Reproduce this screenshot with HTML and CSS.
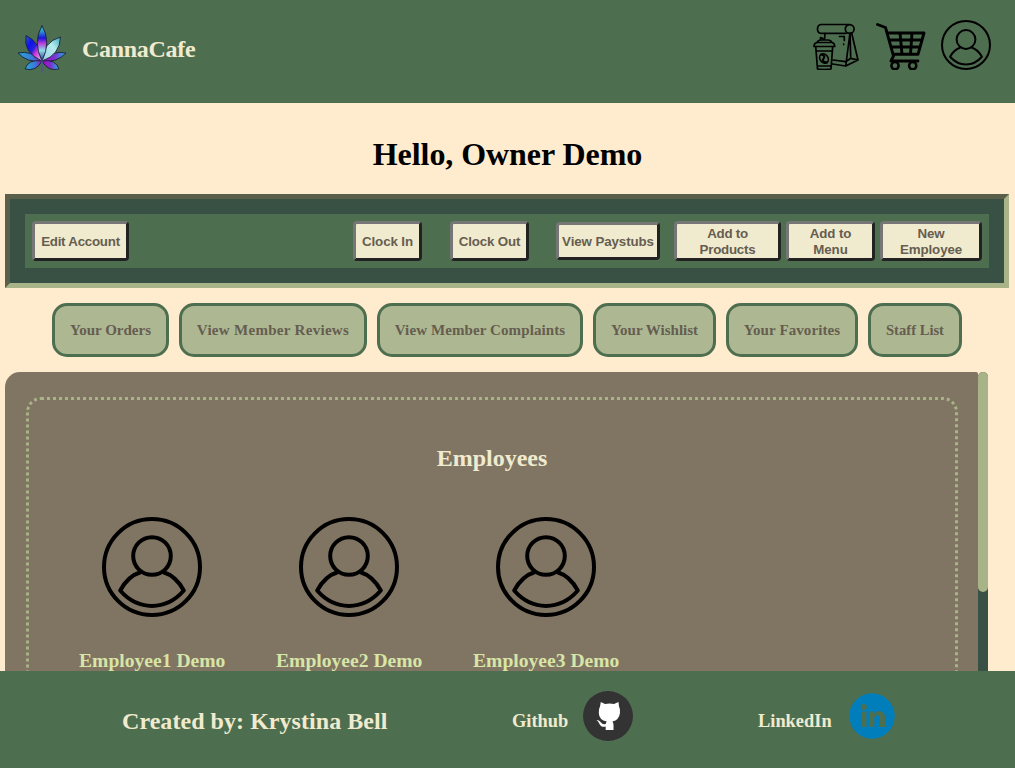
FILE: index.html
```html
<!DOCTYPE html>
<html lang="en">
<head>
<meta charset="utf-8">
<title>CannaCafe</title>
<link rel="stylesheet" href="styles.css">
</head>
<body>
<svg width="0" height="0" class="defs">
  <defs>
    <symbol id="user" viewBox="0 0 100 100">
      <g fill="none" stroke="#000" stroke-width="4" stroke-linejoin="round">
        <circle cx="50" cy="50" r="48"/>
        <circle cx="50" cy="39" r="18.800"/>
        <path d="M39 55Q26 59 18.200 73.500C36 94 64 94 81.800 73.500Q74 59 61 55"/>
      </g>
    </symbol>
    <linearGradient id="g1" x1="0" y1="0" x2="0" y2="1">
      <stop offset="0" stop-color="#35b5cf"/><stop offset=".15" stop-color="#35a0cf"/><stop offset=".35" stop-color="#1616dc"/><stop offset=".5" stop-color="#b83ad8"/><stop offset=".7" stop-color="#8edce8"/><stop offset="1" stop-color="#2c2c90"/>
    </linearGradient>
    <linearGradient id="g2" x1="0" y1="0" x2="1" y2="1">
      <stop offset="0" stop-color="#2a60c8"/><stop offset=".3" stop-color="#1010ee"/><stop offset=".5" stop-color="#2222dd"/><stop offset=".65" stop-color="#d236d2"/><stop offset="1" stop-color="#c9d4f0"/>
    </linearGradient>
    <linearGradient id="g3" x1="1" y1="0" x2="0" y2="1">
      <stop offset="0" stop-color="#35a9bd"/><stop offset=".4" stop-color="#b5ecec"/><stop offset="1" stop-color="#9bcfe6"/>
    </linearGradient>
    <linearGradient id="g4">
      <stop offset="0" stop-color="#2aa8d8"/><stop offset=".6" stop-color="#3a78d8"/><stop offset="1" stop-color="#9b10b8"/>
    </linearGradient>
    <linearGradient id="g5">
      <stop offset="0" stop-color="#b000c8"/><stop offset=".5" stop-color="#7a30d0"/><stop offset="1" stop-color="#25b3dc"/>
    </linearGradient>
  </defs>
</svg>
<header class="header">
  <div class="brand">
    <svg class="leaf" viewBox="0 0 50 50">
      <g stroke="#16203a" stroke-width=".9">
        <path fill="url(#g4)" d="M25 36Q14 25 1 28Q10 38 25 36Z"/>
        <path fill="url(#g5)" d="M25 36Q36 25 49 28Q40 38 25 36Z"/>
        <path fill="url(#g4)" d="M25 36Q11 34 8 44Q19 47 25 36Z"/>
        <path fill="url(#g5)" d="M25 36Q39 34 42 44Q31 47 25 36Z"/>
        <path fill="url(#g2)" d="M25 36Q6 28 9 10.500Q23 17 25 36Z"/>
        <path fill="url(#g3)" d="M25 36Q26 17 43.500 12Q43 30 25 36Z"/>
        <path fill="url(#g1)" d="M25 36Q15.500 17 25 .5Q34.500 17 25 36Z"/>
      </g>
      <path d="M25 34V48" stroke="#45559b" stroke-width="1.200"/>
    </svg>
    <span class="brand-name">CannaCafe</span>
  </div>
  <nav class="icons">
    <svg class="icon order" viewBox="0 0 50 50" fill="none" stroke="#000" stroke-width="1.700" stroke-linejoin="round" stroke-linecap="round">
      <path d="M38 4.500H10Q6.500 5 6.500 9T10 13.300H35"/><circle cx="38.700" cy="9" r="4.400"/>
      <path d="M14 13.500L13.500 19M39 13L34.700 46L21.500 44M40.700 13.300L47 40L34.700 46M39 13L39.700 38.300L47 40M39.700 38.300L34.700 41.700L22 40"/>
      <path d="M28.500 16.500H33.300V20.500M32.700 24V24.500"/>
      <path d="M9.500 20V17.500L12 18.500V20M6 22.500Q7 20 10 20H17Q20 20 21 22.500ZM6 22.500Q3 23 3 26.500H23.700Q23.700 23 21 22.500M4.700 26.500L6.500 49Q13 50 20 49L21.700 26.500M5.500 31H21.300M6.300 46H20.300"/>
      <ellipse cx="13" cy="38.500" rx="4" ry="5" transform="rotate(-35 13 38.500)"/>
      <path d="M10 34.500Q15 35.500 12.500 38.700T16 42.500" stroke-width="2"/>
    </svg>
    <svg class="icon cart" viewBox="0 0 50 50" fill="none" stroke="#000">
      <path d="M1.500 4.500L9.500 7.500L17.500 36L15 41H42" stroke-width="2.800" stroke-linejoin="round" stroke-linecap="round"/>
      <path d="M11 13H48L42 34.300H17M13 20H46M15 27H44M24 13L26 34M36 13L34.500 34" stroke-width="2.900" stroke-linejoin="round"/>
      <circle cx="19" cy="45.700" r="3.600" stroke-width="2.500"/><circle cx="36.700" cy="45.700" r="3.600" stroke-width="2.500"/>
    </svg>
    <svg class="icon"><use href="#user"/></svg>
  </nav>
</header>
<main class="main">
  <h1 class="title">Hello, Owner Demo</h1>
  <section class="toolbar">
    <div class="toolbar-row">
      <button class="btn edit">Edit Account</button>
      <button class="btn in">Clock In</button>
      <button class="btn out">Clock Out</button>
      <button class="btn pay">View Paystubs</button>
      <button class="btn products">Add to<br>Products</button>
      <button class="btn menu">Add to<br>Menu</button>
      <button class="btn employee">New<br>Employee</button>
    </div>
  </section>
  <nav class="tabs">
    <button class="tab orders">Your Orders</button>
    <button class="tab reviews">View Member Reviews</button>
    <button class="tab complaints">View Member Complaints</button>
    <button class="tab wishlist">Your Wishlist</button>
    <button class="tab favorites">Your Favorites</button>
    <button class="tab staff-list">Staff List</button>
  </nav>
  <section class="panel">
    <div class="panel-body">
      <div class="staff">
        <h2 class="staff-title">Employees</h2>
        <div class="cards">
          <div class="card"><svg class="avatar"><use href="#user"/></svg><h3 class="name">Employee1 Demo</h3></div>
          <div class="card"><svg class="avatar"><use href="#user"/></svg><h3 class="name">Employee2 Demo</h3></div>
          <div class="card"><svg class="avatar"><use href="#user"/></svg><h3 class="name">Employee3 Demo</h3></div>
        </div>
      </div>
    </div>
    <div class="track"><div class="thumb"></div></div>
  </section>
</main>
<footer class="footer">
  <span class="credit">Created by: Krystina Bell</span>
  <div class="link github"><span>Github</span>
    <svg class="gh" viewBox="0 0 50 50"><circle cx="25" cy="25" r="25" fill="#333"/>
      <path fill="#fff" d="M17.800 11L22 13Q26.500 12 31 13L35.500 11L36 15.500Q37.500 18 37 22Q36 29 29.500 30.500Q30.500 32 30.500 34V39H22.700V35.500C18 36.500 17 34 16 32Q15 30 13.500 29Q16 28.500 18 31.500Q19.500 34 22.700 33Q22.800 31.500 23.800 30.500Q16 29 15.800 22Q15.500 18 17 15.500Z"/>
    </svg>
  </div>
  <div class="link linkedin"><span>LinkedIn</span>
    <svg class="li" viewBox="0 0 46 46"><circle cx="23" cy="23" r="22.700" fill="#007ebb"/>
      <g fill="#4e6e50"><circle cx="14.800" cy="14" r="3"/><path d="M12.200 18.500H17.400V34H12.200ZM20 18.500H25V20.500Q26.700 18 30 18Q36 18 36 24.500V34H30.700V25.500Q30.700 22.300 28.200 22.300Q25.300 22.300 25.300 25.500V34H20Z"/></g>
    </svg>
  </div>
</footer>
</body>
</html>
```
FILE: styles.css
```css
* { box-sizing: border-box; }
body {
  margin: 0;
  height: 768px;
  overflow: hidden;
  display: flex;
  flex-direction: column;
  background: #ffebcd;
  font-family: "Liberation Serif", "Times New Roman", serif;
}
.defs { position: absolute; }
.header {
  flex: none;
  height: 103px;
  display: flex;
  justify-content: space-between;
  background: #4e6e50;
}
.brand { display: flex; padding: 25px 0 0 17px; height: 75px; }
.leaf { width: 50px; height: 50px; }
.brand-name {
  margin-left: 15px;
  line-height: 48px;
  font-size: 24px;
  font-weight: bold;
  letter-spacing: -.3px;
  color: #f0ebce;
}
.icons { display: flex; gap: 15px; padding: 20px 24px 0 0; }
.icon { width: 50px; height: 50px; }
.main {
  flex: 1;
  min-height: 0;
  display: flex;
  flex-direction: column;
  padding-left: 5px;
}
.title {
  margin: 33px 0 22px -5px;
  font-size: 32px;
  line-height: 36px;
  letter-spacing: -.06px;
  text-align: center;
}
.toolbar {
  flex: none;
  width: 1004px;
  height: 94px;
  padding: 15px;
  border: 5px inset #a9b388;
  background: #395144;
}
.toolbar-row {
  display: flex;
  align-items: center;
  height: 54px;
  padding-left: 7px;
  background: #4e6e50;
}
.btn {
  flex: none;
  height: 40px;
  padding: 1px 0 0;
  border: 3px solid;
  border-color: #767676 #222 #222 #767676;
  border-radius: 4px;
  background: #f0ebce;
  color: #665d50;
  font: bold 13.333px/16px "Liberation Sans", Arial, sans-serif;
  letter-spacing: -.1px;
}
.edit { width: 97px; margin-right: 224px; letter-spacing: -.25px; }
.in { width: 69px; margin-right: 28px; }
.out { width: 79px; margin-right: 27px; letter-spacing: -.15px; }
.pay { width: 104px; height: 38px; margin-right: 14px; }
.products { width: 107px; margin-right: 5px; letter-spacing: -.25px; }
.menu { width: 89px; margin-right: 5px; }
.employee { width: 102px; }
.tabs {
  flex: none;
  display: flex;
  gap: 10px;
  padding: 15px 0 15px 47px;
}
.tab {
  height: 54px;
  padding: 1px 0 0;
  border: 3px solid #4e6e50;
  border-radius: 15px;
  background: #adb892;
  color: #665d50;
  font: bold 15px "Liberation Serif", serif;
  white-space: nowrap;
}
.orders { width: 117px; }
.reviews { width: 188px; letter-spacing: .3px; }
.complaints { width: 206px; letter-spacing: .1px; }
.wishlist { width: 123px; }
.favorites { width: 132px; letter-spacing: .1px; }
.staff-list { width: 94px; font-size: 14.6px; }
.panel { flex: 1; min-height: 0; display: flex; width: 983px; overflow: hidden; }
.panel-body {
  width: 973px;
  padding: 25px 20px 0 21px;
  border-radius: 15px 2px 0 0;
  background: #807463;
}
.staff {
  height: 600px;
  border: 3px dotted #a9b388;
  border-radius: 15px;
}
.staff-title {
  margin: 44px 0 0;
  font-size: 24px;
  line-height: 28px;
  text-align: center;
  color: #f0ebce;
}
.cards { display: flex; gap: 50px; padding: 45px 0 0 49px; }
.card { width: 147px; text-align: center; }
.avatar { display: block; width: 100px; height: 100px; margin: 0 auto; }
.name {
  margin: 33px 0 0 1px;
  font-size: 19.6px;
  line-height: 22px;
  white-space: nowrap;
  color: #d7e5a6;
}
.track { width: 10px; border-radius: 5px 5px 0 0; background: #395144; }
.thumb { height: 220px; border-radius: 5px; background: #a9b388; }
.footer {
  flex: none;
  display: flex;
  height: 97px;
  padding-left: 122px;
  background: #4e6e50;
  color: #f0ebce;
}
.credit { width: 390px; font-size: 24px; font-weight: bold; line-height: 100px; letter-spacing: .05px; }
.link { display: flex; font-weight: bold; font-size: 18.4px; line-height: 100px; }
.github { width: 246px; }
.github span { width: 71px; }
.linkedin span { width: 91px; }
.gh { width: 50px; height: 50px; margin-top: 20px; }
.li { width: 46px; height: 46px; margin-top: 22px; }
```
